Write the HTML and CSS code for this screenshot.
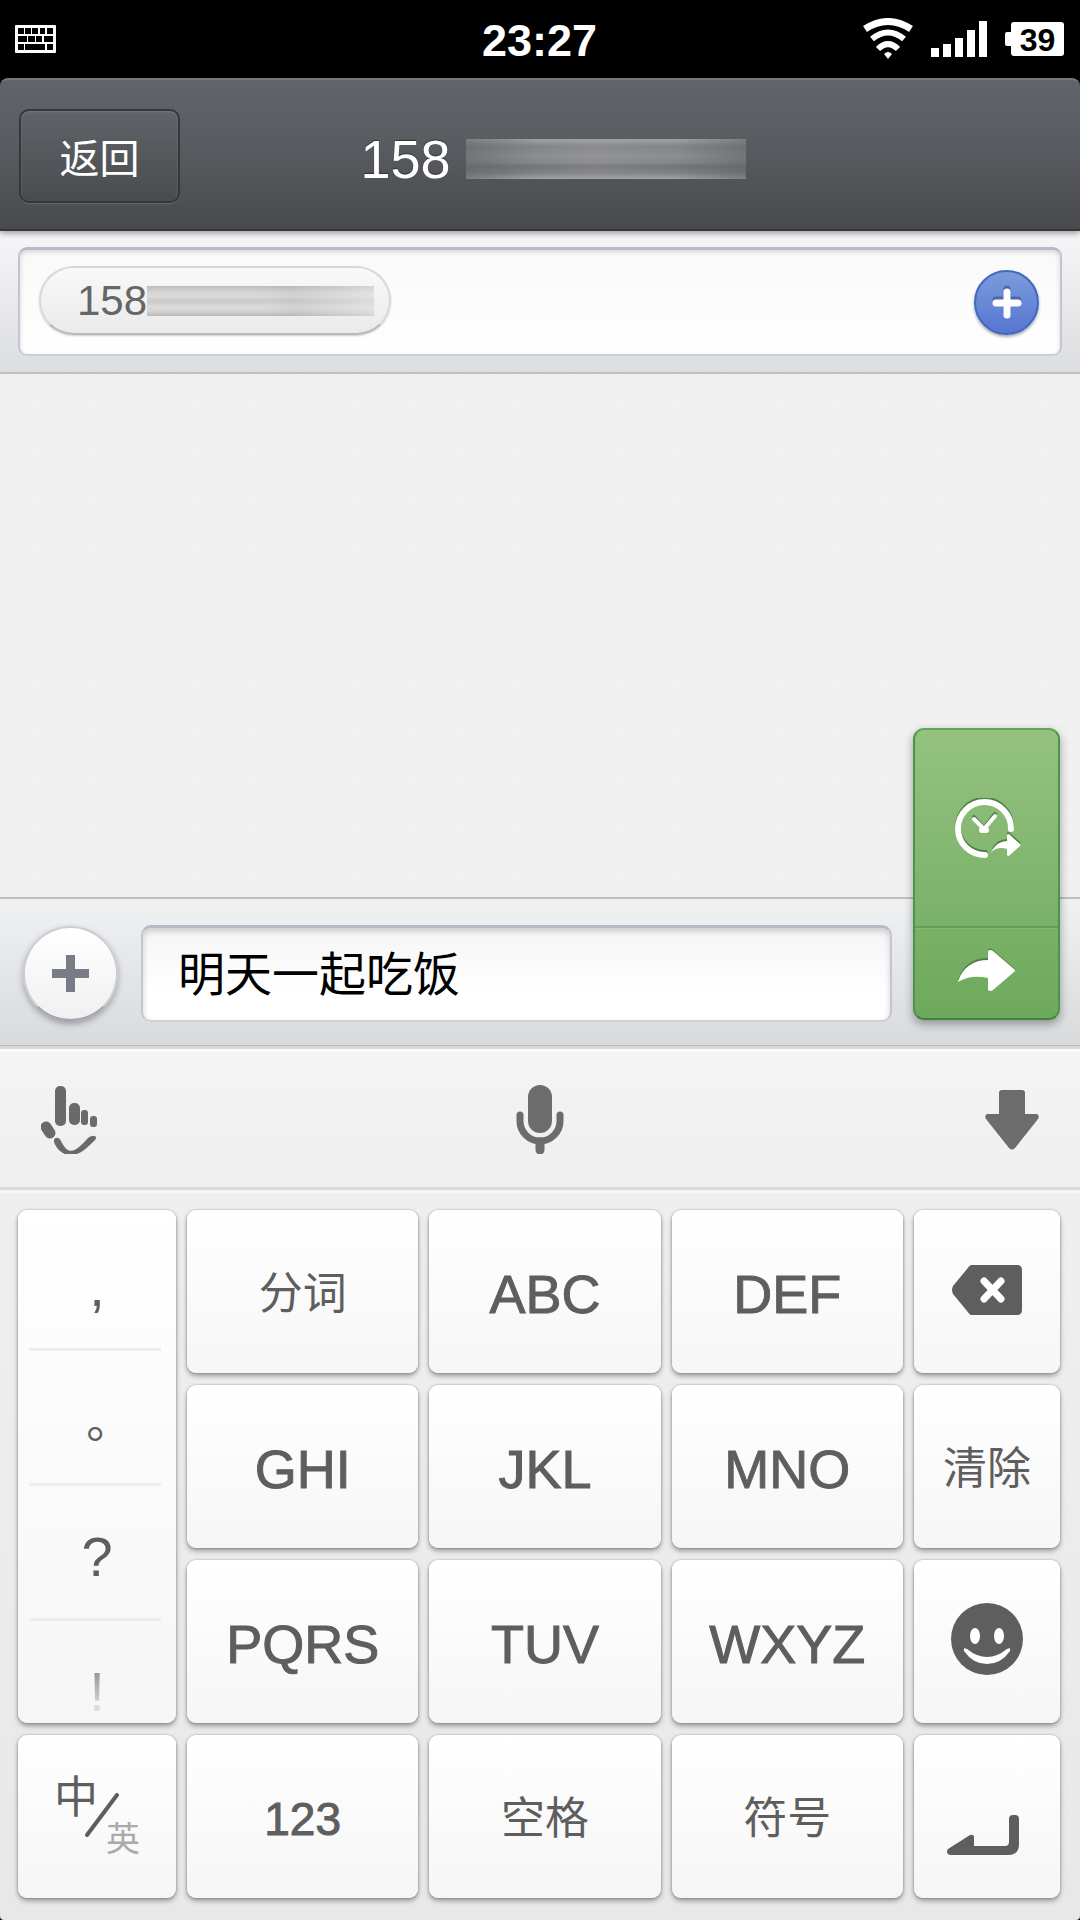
FILE: index.html
```html
<!DOCTYPE html>
<html lang="zh-CN">
  <head>
    <meta charset="UTF-8" />
    <meta name="viewport" content="width=device-width, initial-scale=1.0" />
    <title>新建短信</title>
    <link rel="stylesheet" href="styles.css">
  </head>
  <body>
    <!-- Status bar -->
    <div class="status-bar">
      <svg class="status-keyboard" width="42" height="28" viewBox="0 0 42 28">
        <rect width="41" height="28" rx="1" fill="#fff" />
        <path fill="#000" d="M3 3h6v6H3zM10 3h6v6h-6zM17 3h6v6h-6zM25 3h5v6h-5zM32 3h6v6h-6zM3 11h9v6H3zM13 11h7v6h-7zM21 11h6v6h-6zM29 11h9v6h-9zM3 19h6v6H3zM10 19h20v6H10zM32 19h6v6h-6z" />
      </svg>
      <span class="clock">23:27</span>
      <div class="status-icons">
        <svg width="50" height="42" viewBox="0 0 50 42" fill="none" stroke="#fff" stroke-width="7">
          <path d="M2 11Q25 -4 48 11" />
          <path d="M9 21Q25 8 41 21" stroke-width="6" />
          <path d="M15 31Q25 21 35 31" stroke-width="6" />
          <path d="M21 36q4-4 8 0l-4 5z" fill="#fff" stroke="none" />
        </svg>
        <svg width="56" height="36" viewBox="0 0 56 36" fill="#fff">
          <path d="M0 27h8v9H0zM12 23h8v13h-8zM24 17h8v19h-8zM36 9h8v27h-8zM48 0h8v36h-8z" />
        </svg>
        <div class="battery">39</div>
      </div>
    </div>

    <!-- Header -->
    <header class="header">
      <button class="back-button" type="button">返回</button>
      <h1 class="title">158 <span class="masked"></span></h1>
    </header>

    <!-- Recipients -->
    <div class="recipients">
      <div class="recipients-box">
        <span class="chip">158<span class="masked"></span></span>
        <input type="text" class="recipient-input" aria-label="收件人">
        <button class="add-contact" type="button" aria-label="添加联系人">
          <svg width="34" height="38" viewBox="0 0 34 38" stroke-width="7" stroke-linecap="round">
            <path d="M17 6v23M6 17h22" stroke="#4a69ad" />
            <path d="M17 9v23M6 20h22" stroke="#fff" />
          </svg>
        </button>
      </div>
    </div>

    <main class="messages"></main>

    <!-- Compose bar -->
    <div class="compose">
      <button class="attach" type="button" aria-label="添加附件">
        <svg width="37" height="37" viewBox="0 0 37 37">
          <path d="M14 0h9v14h14v9H23v14h-9V23H0v-9h14z" fill="#787c87" />
        </svg>
      </button>
      <input type="text" class="compose-input" value="明天一起吃饭" aria-label="短信内容">

      <div class="send-menu">
        <button class="send-later" type="button" aria-label="定时发送">
          <svg width="70" height="64" viewBox="0 0 70 64">
            <g fill="none" stroke="#517f40" stroke-linecap="round" transform="translate(0 -2)">
              <path d="M59 31A26.500 26.500 0 1 0 33 57" stroke-width="6" />
              <path d="M22 21L32 32L43 18" stroke-width="4" />
              <path d="M39 54q6-11 16-11v-6q1-2 3 0l10 9q1 1 0 2l-10 9q-2 2-3 0v-6q-9-3-16 3z" fill="#517f40" stroke="none" />
            </g>
            <g fill="none" stroke="#fff" stroke-linecap="round">
              <path d="M59 31A26.500 26.500 0 1 0 33 57" stroke-width="6" />
              <path d="M22 21L32 31L43 18" stroke-width="4" />
              <path d="M30 32h4" stroke-width="6" />
              <path d="M39 54q6-11 16-11v-6q1-2 3 0l10 9q1 1 0 2l-10 9q-2 2-3 0v-6q-9-3-16 3z" fill="#fff" stroke="none" />
            </g>
          </svg>
        </button>
        <button class="send-now" type="button" aria-label="发送">
          <svg width="58" height="44" viewBox="0 0 58 44">
            <path d="M0 32C4 17 16 10 30 10V2q2-3 5 0l21 18q2 2 0 3L35 41q-3 2-5 0V29Q13 24 0 32z" fill="#517f40" />
            <path d="M0 34C4 19 16 12 30 12V3q2-2 5 0l21 18q2 2 0 3L35 42q-3 2-5 0V30Q13 26 0 34z" fill="#fff" />
          </svg>
        </button>
      </div>
    </div>

    <!-- Keyboard -->
    <section class="keyboard">
      <div class="toolbar">
        <button type="button" aria-label="手写">
          <svg width="58" height="68" viewBox="0 0 58 68" fill="#6a6a6a">
            <rect x="14" y="0" width="11" height="40" rx="5" />
            <rect x="28" y="17" width="11" height="22" rx="5" />
            <rect x="40" y="24" width="7" height="15" rx="3" />
            <rect x="49" y="30" width="7" height="11" rx="3" />
            <path d="M5 41L9 47" fill="none" stroke="#6a6a6a" stroke-width="11" stroke-linecap="round" />
            <path d="M13 56c-1-5 5-6 7-1 7 14 13 13 27-3 6-5 11-1 6 3C43 65 38 69 29 69 21 69 15 62 13 56z" />
          </svg>
        </button>
        <button type="button" aria-label="语音输入">
          <svg width="48" height="69" viewBox="0 0 48 69">
            <rect x="12" y="0" width="24" height="48" rx="12" fill="#6c6c6c" />
            <path d="M4 30v6a20 20 0 0 0 40 0v-6" fill="none" stroke="#6c6c6c" stroke-width="7" stroke-linecap="round" />
            <path d="M24 57v8" stroke="#6c6c6c" stroke-width="9" stroke-linecap="round" />
          </svg>
        </button>
        <button type="button" aria-label="收起键盘">
          <svg width="54" height="60" viewBox="0 0 54 60" fill="#6c6c6c">
            <path d="M17 0h20q3 0 3 3v21h12q3 2 1 5L30 58q-3 3-6 0L1 29q-2-3 1-5h12V3q0-3 3-3z" />
          </svg>
        </button>
      </div>

      <div class="keys">
        <div class="key punctuation">
          <button type="button">,</button>
          <button type="button" class="period">。</button>
          <button type="button">?</button>
          <button type="button">!</button>
        </div>
        <button class="key cn" type="button">分词</button>
        <button class="key" type="button">ABC</button>
        <button class="key" type="button">DEF</button>
        <button class="key" type="button" aria-label="退格">
          <svg width="70" height="54" viewBox="0 0 70 54">
            <path d="M19 0h46q5 0 5 5v40q0 5-5 5H19q-2-1-4-4L1 29q-2-4 0-8L15 4q2-3 4-4z" fill="#5e5e5e" />
            <path d="M32 16l17 18M49 16L32 34" stroke="#fff" stroke-width="7" stroke-linecap="round" />
          </svg>
        </button>

        <button class="key" type="button">GHI</button>
        <button class="key" type="button">JKL</button>
        <button class="key" type="button">MNO</button>
        <button class="key cn" type="button">清除</button>

        <button class="key" type="button">PQRS</button>
        <button class="key" type="button">TUV</button>
        <button class="key" type="button">WXYZ</button>
        <button class="key" type="button" aria-label="表情">
          <svg width="72" height="78" viewBox="0 0 72 78">
            <circle cx="36" cy="36" r="36" fill="#5e5e5e" />
            <ellipse cx="24" cy="33" rx="5" ry="8" fill="#fff" />
            <ellipse cx="48" cy="33" rx="5" ry="8" fill="#fff" />
            <path d="M13 48q-1-4 3-2 20 16 40 0 4-2 3 2-9 13-23 13T13 48z" fill="#fff" />
          </svg>
        </button>

        <button class="key lang-key" type="button">
          <span class="lang-on">中</span>
          <svg width="36" height="48" viewBox="0 0 36 48">
            <path d="M3 42L33 2" stroke="#5e5e5e" stroke-width="4" stroke-linecap="round" />
          </svg>
          <span class="lang-off">英</span>
        </button>
        <button class="key number" type="button">123</button>
        <button class="key cn" type="button">空格</button>
        <button class="key cn" type="button">符号</button>
        <button class="key" type="button" aria-label="换行">
          <svg width="80" height="76" viewBox="0 0 80 76">
            <path d="M1 70L23 56q4-1 4 2v9h31q4 0 4-4V40q0-4 4-4h2q4 0 4 4v25q0 11-11 11H3q-5-2-2-6z" fill="#5e5e5e" />
          </svg>
        </button>
      </div>
    </section>
  </body>
</html>
```
FILE: styles.css
```css
* {
  margin: 0;
  padding: 0;
  box-sizing: border-box;
}

html {
  background: #000;
}

body {
  font-family: "Liberation Sans", "Noto Sans CJK SC", sans-serif;
  min-height: 100vh;
  display: flex;
  flex-direction: column;
  background: #000;
}

button {
  font-family: inherit;
  border: none;
  background: none;
  display: flex;
  align-items: center;
  justify-content: center;
}

input {
  font-family: inherit;
  border: none;
  outline: none;
  background: none;
  min-width: 0;
}

/* Status bar */
.status-bar {
  height: 78px;
  padding: 0 16px 0 15px;
  display: grid;
  grid-template-columns: 1fr auto 1fr;
  align-items: center;
  color: #fff;
}

.clock {
  font-size: 45px;
  font-weight: bold;
  padding-top: 4px;
}

.status-icons {
  display: flex;
  align-items: center;
  justify-content: flex-end;
  gap: 18px;
}

.battery {
  position: relative;
  width: 53px;
  height: 34px;
  margin-left: 6px;
  border-radius: 3px;
  background: #fff;
  color: #000;
  font-size: 32px;
  line-height: 36px;
  font-weight: bold;
  text-align: center;
}

.battery::before {
  content: "";
  position: absolute;
  left: -6px;
  top: 10px;
  width: 6px;
  height: 14px;
  border-radius: 2px 0 0 2px;
  background: #fff;
}

/* Header */
.header {
  position: relative;
  height: 153px;
  padding: 2px 19px 0;
  display: grid;
  grid-template-columns: 1fr auto 1fr;
  align-items: center;
  background: linear-gradient(#616469, #585b5f 45%, #48494d);
  border-top: 2px solid #74787c;
  border-bottom: 2px solid #37383a;
  border-radius: 8px 8px 0 0;
  box-shadow: 0 2px 6px rgba(0, 0, 0, 0.4);
}

.back-button {
  width: 161px;
  height: 94px;
  color: #fff;
  font-size: 40px;
  border: 2px solid #35373b;
  border-radius: 10px;
  background: linear-gradient(#606468, #484c4f);
  box-shadow: inset 0 1px 2px #777b7f, 0 1px 1px #66696d;
}

.title {
  display: flex;
  align-items: center;
  gap: 15px;
  padding-left: 26px;
  padding-top: 6px;
  color: #fff;
  font-size: 54px;
  font-weight: normal;
  text-shadow: 0 -1px 1px #333;
}

.title .masked {
  width: 280px;
  height: 40px;
  background:
    linear-gradient(90deg, rgba(90, 92, 95, 0.5), transparent 25%, rgba(170, 170, 175, 0.2) 45%, transparent 75%, rgba(90, 92, 95, 0.5)),
    linear-gradient(#a0a1a3, #828386 20%, #8d8e91 40%, #85868a 60%, #737477 68%, #808184 85%, #a2a3a5);
}

/* Recipients */
.recipients {
  padding: 16px 18px;
  background: linear-gradient(#f6f6f8, #dcdde0);
  border-bottom: 2px solid #bebfc1;
}

.recipients-box {
  display: flex;
  align-items: center;
  height: 109px;
  padding: 0 21px 0 19px;
  border: 2px solid #c3c6d1;
  border-top: 3px solid #b8bbc7;
  border-bottom-color: #cdcfda;
  border-radius: 9px;
  background: linear-gradient(#f9f9f9, #fff);
  box-shadow: inset 0 2px 5px rgba(0, 0, 0, 0.15);
}

.chip {
  display: flex;
  align-items: center;
  width: 352px;
  height: 69px;
  margin-bottom: 4px;
  padding-left: 36px;
  padding-top: 2px;
  color: #666;
  font-size: 42px;
  border: 2px solid #d8d8d8;
  border-bottom: 2px solid #b8b8b8;
  border-radius: 35px;
  background: linear-gradient(#f9f9f9, #eaeaea);
  box-shadow: 0 1px 2px rgba(0, 0, 0, 0.2);
}

.chip .masked {
  width: 227px;
  height: 30px;
  background:
    linear-gradient(90deg, transparent 50%, rgba(180, 180, 180, 0.2) 65%, rgba(235, 235, 235, 0.5)),
    linear-gradient(#bcbcbc, #d4d4d4 20%, #dadada 35%, #cacaca 50%, #dcdcdc 70%, #d2d2d2 85%, #b9b9b9);
}

.recipient-input {
  flex: 1;
  height: 70px;
  padding: 0 20px;
  font-size: 42px;
}

.add-contact {
  width: 65px;
  height: 65px;
  border: 2px solid #4267c0;
  border-radius: 50%;
  background: linear-gradient(#7b9bdc, #5676d3);
  box-shadow: 0 2px 3px rgba(0, 0, 0, 0.35);
}

/* Faint linen texture */
.messages {
  flex: 1;
  background:
    repeating-linear-gradient(90deg, transparent 0 11px, rgba(255, 255, 255, 0.08) 11px 13px, transparent 13px 37px, rgba(255, 255, 255, 0.08) 37px 40px, transparent 40px 53px),
    repeating-linear-gradient(transparent 0 17px, rgba(255, 255, 255, 0.08) 17px 19px, transparent 19px 29px, rgba(255, 255, 255, 0.08) 29px 32px, transparent 32px 47px),
    #f0f0f0;
}

/* Compose bar */
.compose {
  position: relative;
  display: flex;
  align-items: center;
  height: 149px;
  padding: 2px 188px 0 23px;
  border-top: 2px solid #bfbfc0;
  border-bottom: 1px solid #b9b9b9;
  background: linear-gradient(#eff1f3, #d9dadc);
}

.attach {
  width: 95px;
  height: 95px;
  flex-shrink: 0;
  margin-right: 23px;
  border: 2px solid #cbcdd4;
  border-bottom-color: #a2a5af;
  border-radius: 50%;
  background: linear-gradient(#fff, #f0f0f0);
  box-shadow: 0 3px 6px rgba(0, 0, 0, 0.3);
}

.compose-input {
  flex: 1;
  height: 97px;
  padding: 0 35px 6px;
  color: #000;
  font-size: 47px;
  border: 2px solid #c3c6d0;
  border-top: 3px solid #b6bac6;
  border-bottom-color: #cfd0da;
  border-radius: 10px;
  background: linear-gradient(#f5f5f5, #fff 70%);
  box-shadow: inset 0 3px 6px rgba(0, 0, 0, 0.18);
}

/* Send menu opens upwards over the messages */
.send-menu {
  position: absolute;
  right: 20px;
  bottom: 25px;
  width: 147px;
  border: 2px solid #4f9249;
  border-top-color: #60a65a;
  border-bottom-color: #40843b;
  border-radius: 11px;
  background: linear-gradient(#95c280, #6da95c);
  box-shadow: 0 4px 10px rgba(0, 0, 0, 0.35);
}

.send-later,
.send-now {
  width: 100%;
}

.send-later {
  height: 198px;
  padding-top: 4px;
  border-bottom: 2px solid #62a055;
}

.send-now {
  height: 90px;
  padding-bottom: 8px;
  border-top: 1px solid #85b874;
}

/* Keyboard */
.keyboard {
  background: linear-gradient(#f4f4f4, #efefef 15%, #e8e8e8);
  border-top: 3px solid #d9d9d9;
  border-radius: 0 0 4px 4px;
}

.toolbar {
  display: grid;
  grid-template-columns: 1fr auto 1fr;
  align-items: center;
  height: 141px;
  padding: 0 41px;
  border-top: 3px solid #fafafa;
  border-bottom: 3px solid #dadada;
}

.toolbar button:first-child {
  justify-self: start;
}

.toolbar button:last-child {
  justify-self: end;
}

.keys {
  display: grid;
  grid-template-columns: 158px 1fr 1fr 1fr 146px;
  grid-auto-rows: 163px;
  gap: 12px 11px;
  padding: 17px 20px 22px 18px;
  border-top: 3px solid #f5f5f5;
}

.key {
  padding-top: 4px;
  color: #5e5e5e;
  font-size: 54px;
  line-height: 1;
  -webkit-text-stroke: 1px #5e5e5e;
  border-radius: 9px;
  background: linear-gradient(#fff, #f6f6f6);
  box-shadow: 0 0 2px rgba(0, 0, 0, 0.35), 0 3px 5px rgba(0, 0, 0, 0.35);
}

.key svg {
  margin-top: -4px;
}

.cn {
  font-size: 44px;
  -webkit-text-stroke: 0;
}

.number {
  font-size: 46px;
}

.punctuation {
  grid-row: span 3;
  overflow: hidden;
  padding: 6px 15px 0 11px;
  -webkit-text-stroke: 0;
}

.punctuation button {
  width: 100%;
  height: 135px;
  padding-top: 10px;
  padding-left: 4px;
  color: #5e5e5e;
  font-size: 56px;
  line-height: 64px;
  border-bottom: 3px solid #ededed;
}

.punctuation .period {
  padding-top: 28px;
  padding-left: 0;
  font-family: "Noto Sans CJK TC", sans-serif;
  font-size: 46px;
}

.punctuation button:last-child {
  color: transparent;
  background: linear-gradient(#777 25%, #f0f0f0 75%);
  -webkit-background-clip: text;
  background-clip: text;
}

.lang-key {
  padding-top: 0;
}

.lang-key svg {
  margin: 0 -14px;
}

.lang-on {
  font-size: 44px;
  padding-bottom: 38px;
  -webkit-text-stroke: 0;
}

.lang-off {
  font-size: 34px;
  padding-top: 44px;
  color: #aaa;
  -webkit-text-stroke: 0;
}
```
